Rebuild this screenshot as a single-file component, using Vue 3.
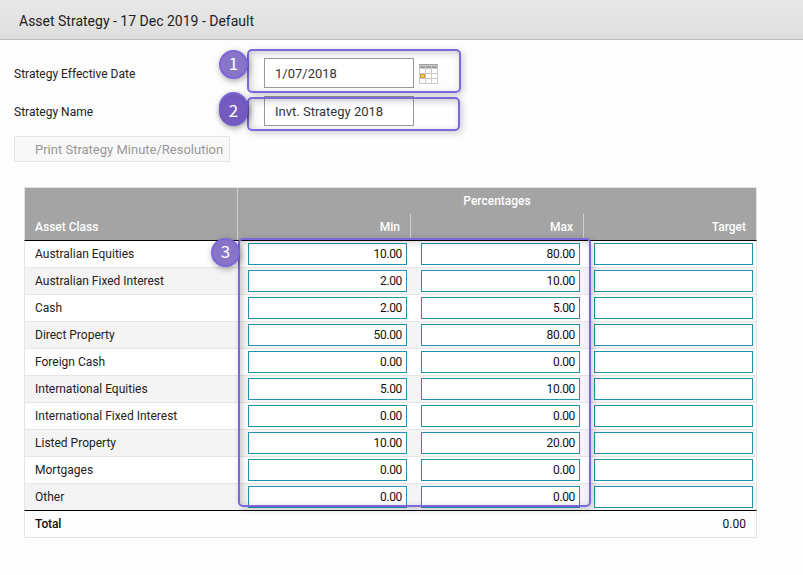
<template>
    <div class="page">
        <header class="title-bar">Asset Strategy - 17 Dec 2019 - Default</header>

        <div class="form">
            <div class="form-row">
                <label for="effective-date">Strategy Effective Date</label>
                <input id="effective-date" v-model="effectiveDate" class="text-input">
                <svg class="calendar" width="19" height="20" viewBox="0 0 19 20">
                    <rect width="19" height="20" fill="#c9c9c9" />
                    <rect width="19" height="1" fill="#a5a09d" />
                    <g fill="#a5a09d">
                        <rect x="1" y="2" width="5" height="2" />
                        <rect x="7" y="2" width="5" height="2" />
                        <rect x="13" y="2" width="5" height="2" />
                    </g>
                    <g fill="#fff">
                        <template v-for="y in [5, 10, 15]" :key="y">
                            <rect v-for="x in [1, 7, 13]" :key="x" :x="x" :y="y" width="5" height="4" />
                        </template>
                    </g>
                    <rect x="1" y="10" width="5" height="4" fill="#d4a017" />
                    <rect x="2" y="11" width="3" height="2" fill="#edc971" />
                </svg>
            </div>
            <div class="form-row">
                <label for="strategy-name">Strategy Name</label>
                <input id="strategy-name" v-model="strategyName" class="text-input">
            </div>
            <button class="print-button" disabled>Print Strategy Minute/Resolution</button>
        </div>

        <div class="table">
            <div class="table-head">
                <div class="head-class">Asset Class</div>
                <div class="head-group">
                    <div class="head-title">Percentages</div>
                    <div class="head-columns">
                        <div>Min</div>
                        <div>Max</div>
                        <div>Target</div>
                    </div>
                </div>
            </div>
            <div v-for="row in rows" :key="row.name" class="table-row">
                <div class="name">{{ row.name }}</div>
                <div class="cell"><input v-model="row.min" class="number-input"></div>
                <div class="cell"><input v-model="row.max" class="number-input"></div>
                <div class="cell"><input v-model="row.target" class="number-input"></div>
            </div>
            <div class="table-total">
                <span>Total</span>
                <span>0.00</span>
            </div>
        </div>

        <!-- Step markers over the form and the table -->
        <div class="frame frame-date"></div>
        <div class="frame frame-name"></div>
        <div class="frame frame-limits"></div>
        <div class="badge badge-date">1</div>
        <div class="badge badge-back"></div>
        <div class="badge badge-name">2</div>
        <div class="badge badge-limits">3</div>
    </div>
</template>

<script setup>
import { ref } from 'vue';

const effectiveDate = ref('1/07/2018');
const strategyName = ref('Invt. Strategy 2018');

const rows = ref([
    { name: 'Australian Equities', min: '10.00', max: '80.00', target: '' },
    { name: 'Australian Fixed Interest', min: '2.00', max: '10.00', target: '' },
    { name: 'Cash', min: '2.00', max: '5.00', target: '' },
    { name: 'Direct Property', min: '50.00', max: '80.00', target: '' },
    { name: 'Foreign Cash', min: '0.00', max: '0.00', target: '' },
    { name: 'International Equities', min: '5.00', max: '10.00', target: '' },
    { name: 'International Fixed Interest', min: '0.00', max: '0.00', target: '' },
    { name: 'Listed Property', min: '10.00', max: '20.00', target: '' },
    { name: 'Mortgages', min: '0.00', max: '0.00', target: '' },
    { name: 'Other', min: '0.00', max: '0.00', target: '' },
]);
</script>

<style>
body {
    background: #fdfdfd;
}
</style>

<style scoped>
.page {
    position: relative;
    height: 575px;
    overflow: hidden;
    font-family: Roboto, sans-serif;
    font-size: 12px;
    color: #222;
}

.page * {
    box-sizing: border-box;
}

.title-bar {
    height: 40px;
    padding: 2px 19px 0;
    line-height: 39px;
    font-size: 14px;
    background: linear-gradient(#e8e8e8, #dedede);
    border-bottom: 1px solid #bdbdbd;
}

.form {
    display: flex;
    flex-direction: column;
    align-items: flex-start;
    gap: 8px;
    padding: 18px 14px 0;
}

.form-row {
    display: flex;
    align-items: center;
    height: 30px;
}

.form-row label {
    width: 250px;
    padding-top: 1px;
}

.text-input {
    width: 150px;
    height: 30px;
    padding: 0 10px;
    border: 1px solid #999;
    background: #fff;
    font-family: inherit;
    font-size: 13px;
    color: #333;
}

.calendar {
    margin: 2px 0 0 5px;
}

.print-button {
    width: 216px;
    height: 26px;
    margin-top: 2px;
    padding: 1px 0 0 20px;
    border: 1px solid #e5e5e5;
    background: #f8f8f8;
    font-family: inherit;
    font-size: 13px;
    color: #999;
    text-align: left;
    white-space: nowrap;
}

.table {
    width: 733px;
    margin: 25px 0 0 24px;
}

.table-head {
    display: flex;
    height: 54px;
    border: 1px solid #e2e2e2;
    border-bottom: 1px solid #000;
    background: #a4a4a4;
    color: #fff;
    font-weight: 500;
}

.head-class {
    width: 213px;
    padding: 26px 10px 0;
    line-height: 26px;
    border-right: 1px solid #d0d0d0;
}

.head-group {
    flex: 1;
    line-height: 26px;
}

.head-title {
    text-align: center;
}

.head-columns {
    display: flex;
}

.head-columns div {
    flex: none;
    width: 173px;
    padding-right: 10px;
    text-align: right;
    border-right: 1px solid #d0d0d0;
}

.head-columns div:last-child {
    width: 172px;
    border-right: none;
}

.table-row {
    display: flex;
    height: 27px;
    border: 1px solid #e5e5e5;
    border-top: none;
    background: #fff;
}

.table-row:nth-child(odd) {
    background: #f4f4f4;
}

.table-row:nth-child(11) {
    border-bottom-color: #000;
}

.name {
    flex: none;
    width: 213px;
    padding-left: 10px;
    line-height: 26px;
}

.cell {
    flex: none;
    width: 173px;
    padding: 2px 0 0 10px;
}

.cell:last-child {
    width: 172px;
}

.number-input {
    display: block;
    width: 159px;
    height: 22px;
    padding: 0 4px;
    border: 1px solid #2492ad;
    background: #fff;
    font-family: inherit;
    font-size: 12px;
    letter-spacing: -0.35px;
    color: #111;
    text-align: right;
}

.table-total {
    display: flex;
    justify-content: space-between;
    height: 27px;
    padding: 0 10px;
    line-height: 26px;
    border: 1px solid #e5e5e5;
    border-top: none;
    color: #111;
}

.table-total span:first-child {
    font-weight: 500;
    letter-spacing: -0.1px;
}

.frame {
    position: absolute;
    border: 2px solid #7f66dc;
    border-radius: 5px;
    box-shadow: 2px 2px 7px rgba(0, 0, 0, 0.2), inset 2px 2px 7px rgba(0, 0, 0, 0.2);
    pointer-events: none;
}

.frame-date {
    left: 247px;
    top: 49px;
    width: 214px;
    height: 44px;
}

.frame-name {
    left: 247px;
    top: 97px;
    width: 213px;
    height: 34px;
}

.frame-limits {
    left: 238px;
    top: 238px;
    width: 353px;
    height: 269px;
}

.badge {
    position: absolute;
    width: 29px;
    height: 29px;
    border: 2px solid #7d66db;
    border-radius: 50%;
    background: #8975c8;
    box-shadow: 1px 2px 6px rgba(0, 0, 0, 0.35);
    color: #fff;
    font-family: "Noto Sans CJK SC", sans-serif;
    font-size: 17px;
    line-height: 22px;
    text-align: center;
}

.badge-date {
    left: 219px;
    top: 50px;
}

.badge-back {
    left: 219px;
    top: 92px;
    background: #765fbe;
}

.badge-name {
    left: 219px;
    top: 97px;
    border-color: #7059c8;
    background: #735bc0;
}

.badge-limits {
    left: 211px;
    top: 238px;
}
</style>
